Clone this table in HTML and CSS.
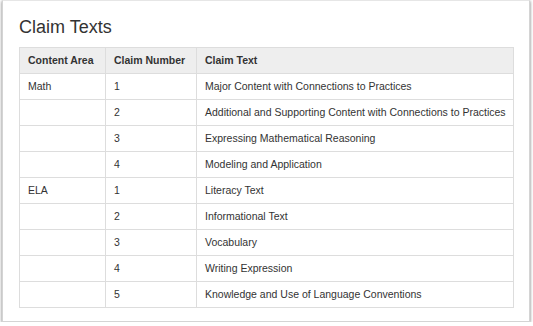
FILE: index.html
```html
<!DOCTYPE html>
<html>
<head>
<meta charset="utf-8">
<link rel="stylesheet" href="styles.css">
</head>
<body>
<div class="card">
  <h2 class="title">Claim Texts</h2>
  <table class="claims">
    <colgroup>
      <col class="c1"><col class="c2"><col>
    </colgroup>
    <thead>
      <tr><th>Content Area</th><th>Claim Number</th><th>Claim Text</th></tr>
    </thead>
    <tbody>
      <tr><td>Math</td><td>1</td><td>Major Content with Connections to Practices</td></tr>
      <tr><td></td><td>2</td><td>Additional and Supporting Content with Connections to Practices</td></tr>
      <tr><td></td><td>3</td><td>Expressing Mathematical Reasoning</td></tr>
      <tr><td></td><td>4</td><td>Modeling and Application</td></tr>
      <tr><td>ELA</td><td>1</td><td>Literacy Text</td></tr>
      <tr><td></td><td>2</td><td>Informational Text</td></tr>
      <tr><td></td><td>3</td><td>Vocabulary</td></tr>
      <tr><td></td><td>4</td><td>Writing Expression</td></tr>
      <tr><td></td><td>5</td><td>Knowledge and Use of Language Conventions</td></tr>
    </tbody>
  </table>
</div>
</body>
</html>
```
FILE: styles.css
```css
html, body {
  margin: 0;
  padding: 0;
  background: #ffffff;
}
body {
  font-family: "Liberation Sans", Arial, sans-serif;
  color: #333333;
}
.card {
  box-sizing: border-box;
  margin-left: 2px;
  width: 528px;
  height: 322px;
  border: 1px solid #d4d4d4;
  border-top-color: #e6e6e6;
  box-shadow: 0 1px 3px rgba(0, 0, 0, 0.55);
  padding: 15px 15px 0 16px;
  background: #fff;
}
.title {
  margin: 0 0 9px 0;
  font-size: 18px;
  font-weight: normal;
  line-height: 22px;
  color: #333333;
}
.claims {
  width: 495px;
  table-layout: fixed;
  border-collapse: collapse;
  font-size: 10.5px;
  line-height: 17px;
}
.claims th, .claims td {
  border: 1px solid #dddddd;
  padding: 4px 8px;
  text-align: left;
  vertical-align: middle;
  white-space: nowrap;
  color: #333333;
}
.claims th {
  background: #eeeeee;
  font-weight: bold;
}
.claims .c1 { width: 86px; }
.claims .c2 { width: 91px; }
```
